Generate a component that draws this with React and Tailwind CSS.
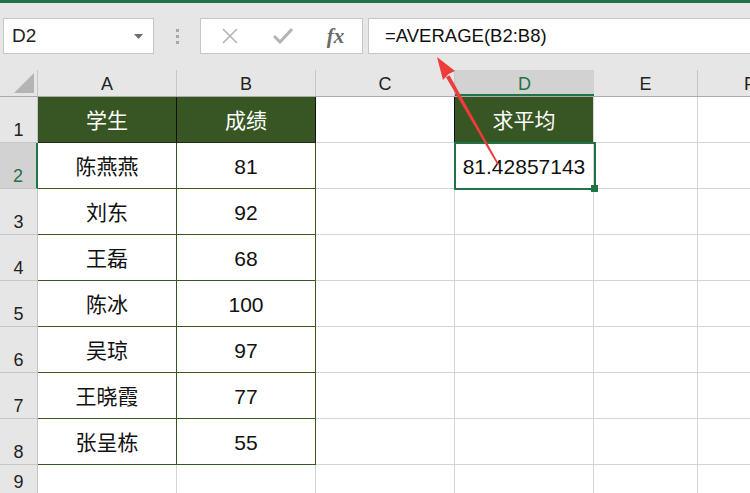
import React from "react";

const rows = [
  ["学生", "成绩"],
  ["陈燕燕", "81"],
  ["刘东", "92"],
  ["王磊", "68"],
  ["陈冰", "100"],
  ["吴琼", "97"],
  ["王晓霞", "77"],
  ["张呈栋", "55"],
  ["", ""],
];

const font = "font-['Liberation_Sans','Noto_Sans_CJK_SC',sans-serif]";

const Toolbar = () => (
  <div className="h-[67px] bg-[#e6e6e6] flex items-start pt-[15px] pl-[3px]">
    {/* name box */}
    <div className="w-[151px] h-[36px] bg-white border border-[#c6c6c6] flex items-center pl-[8px] pr-[10px] shrink-0">
      <span className="text-[19px] text-[#222] flex-1">D2</span>
      <svg width="9" height="5" viewBox="0 0 9 5">
        <path d="M0 0 L9 0 L4.5 5 Z" fill="#6e6e6e" />
      </svg>
    </div>
    <div className="w-[46px] h-[36px] flex flex-col items-center justify-center gap-[3px] shrink-0">
      <div className="w-[3px] h-[3px] bg-[#a8a8a8]" />
      <div className="w-[3px] h-[3px] bg-[#a8a8a8]" />
      <div className="w-[3px] h-[3px] bg-[#a8a8a8]" />
    </div>
    {/* formula buttons */}
    <div className="w-[163px] h-[36px] bg-white border border-[#c6c6c6] flex items-center shrink-0">
      <div className="w-[56px] flex justify-center pl-[2px]">
        <svg width="16" height="16" viewBox="0 0 16 16">
          <path d="M1 1 L15 15 M15 1 L1 15" stroke="#b4b4b4" strokeWidth="1.6" />
        </svg>
      </div>
      <div className="w-[52px] flex justify-center">
        <svg width="20" height="16" viewBox="0 0 20 16">
          <path d="M1 8 L7 14 L19 1" stroke="#b4b4b4" strokeWidth="3" fill="none" />
        </svg>
      </div>
      <div className="flex-1 flex justify-center">
        <span className="font-['Liberation_Serif',serif] italic font-bold text-[21px] text-[#6b6b6b] leading-none">
          fx
        </span>
      </div>
    </div>
    <div className="ml-[5px] flex-1 h-[36px] bg-white border border-r-0 border-[#c6c6c6] flex items-center pl-[16px]">
      <span className="text-[18.5px] text-[#111]">=AVERAGE(B2:B8)</span>
    </div>
  </div>
);

const HeaderRow = () => (
  <div className="h-[27px] flex bg-[#e6e6e6] border-b border-[#ababab] text-[18px] text-[#222]">
    <div className="w-[38px] shrink-0 border-r border-[#c6c6c6] flex items-end justify-end pr-[3px] pb-[3px]">
      <svg width="20" height="20" viewBox="0 0 20 20">
        <path d="M20 0 L20 20 L0 20 Z" fill="#b4b4b4" />
      </svg>
    </div>
    <div className="w-[139px] shrink-0 border-r border-[#c6c6c6] flex items-center justify-center pt-[3px]">A</div>
    <div className="w-[139px] shrink-0 border-r border-[#c6c6c6] flex items-center justify-center pt-[3px]">B</div>
    <div className="w-[139px] shrink-0 border-r border-[#c6c6c6] flex items-center justify-center pt-[3px]">C</div>
    <div className="w-[139px] shrink-0 bg-[#d2d2d2] border-b-2 border-[#217346] text-[#217346] flex items-center justify-center pt-[4px]">D</div>
    <div className="w-[104px] shrink-0 border-r border-[#c6c6c6] flex items-center justify-center pt-[3px]">E</div>
    <div className="flex-1 flex items-center pl-[46px] pt-[3px]">F</div>
  </div>
);

const Row = ({ n, a, b }) => {
  const head = n === 1;
  const inTable = n <= 8;
  const rowHead =
    n === 2
      ? "bg-[#d2d2d2] text-[#217346] border-r-2 border-r-[#217346] border-b border-b-[#c6c6c6]"
      : "bg-[#e6e6e6] text-[#222] border-r border-b border-[#c6c6c6]";
  const tableCell = head
    ? "bg-[#375623] text-white border-b border-b-[#1f2d14] border-r border-r-[#111]"
    : inTable
    ? "bg-white text-[#111] border-r border-b border-[#375623]"
    : "bg-white border-r border-b border-[#d4d4d4]";
  return (
    <div className={`${n === 9 ? "h-[30px]" : "h-[46px]"} flex shrink-0`}>
      <div className={`w-[38px] shrink-0 flex items-end justify-center pb-[3px] text-[18px] leading-none ${rowHead}`}>
        {n}
      </div>
      <div className={`w-[139px] shrink-0 flex items-center justify-center pt-[2px] text-[21px] ${tableCell}`}>{a}</div>
      <div className={`w-[139px] shrink-0 flex items-center justify-center pt-[2px] text-[21px] ${tableCell}`}>{b}</div>
      <div
        className={`w-[139px] shrink-0 border-b border-[#d4d4d4] border-r ${
          head ? "border-r-[#111]" : ""
        }`}
      />
      {n === 1 ? (
        <div className="w-[139px] shrink-0 bg-[#375623] text-white border-r border-[#d4d4d4] flex items-center justify-center pt-[2px] text-[21px]">
          求平均
        </div>
      ) : n === 2 ? (
        <div className="w-[139px] shrink-0 relative border-r border-b border-[#d4d4d4] flex items-center justify-center pt-[2px] text-[21px] text-[#111]">
          81.42857143
          <div className="absolute -left-[1px] -top-[1px] w-[142px] h-[48px] border-2 border-[#217346] z-10">
            <div className="absolute -right-[4px] -bottom-[4px] w-[7px] h-[7px] bg-[#217346]" />
          </div>
        </div>
      ) : (
        <div className="w-[139px] shrink-0 border-r border-b border-[#d4d4d4]" />
      )}
      <div className="w-[104px] shrink-0 border-r border-b border-[#d4d4d4]" />
      <div className="flex-1 border-b border-[#d4d4d4]" />
    </div>
  );
};

export default function App() {
  return (
    <div className={`w-[750px] h-[493px] overflow-hidden bg-white relative ${font}`}>
      <div className="h-[3px] bg-[#217346]" />
      <Toolbar />
      <HeaderRow />
      {rows.map((r, i) => (
        <Row key={i} n={i + 1} a={r[0]} b={r[1]} />
      ))}
      <svg
        className="absolute left-0 top-0 pointer-events-none z-20"
        width="750"
        height="493"
        viewBox="0 0 750 493"
      >
        <path d="M497.5 165 L499 164.2 L449.5 75.3 L446 77.3 Z" fill="#ee3b3b" />
        <path d="M437 57 L455 71 L448.5 74 L443 80 Z" fill="#ee3b3b" />
      </svg>
    </div>
  );
}
